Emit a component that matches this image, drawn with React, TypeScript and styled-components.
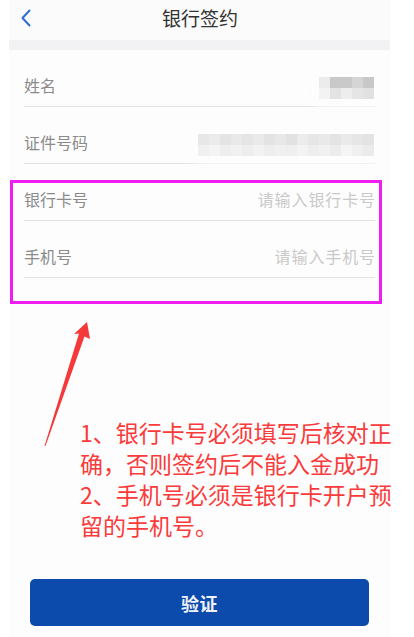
import { FC } from "react";
import styled, { createGlobalStyle } from "styled-components";

// #region styled
const GlobalStyle = createGlobalStyle`
  html, body {
    margin: 0;
    padding: 0;
    background: #ffffff;
  }
  body {
    font-family: "Noto Sans CJK SC", "Noto Sans", sans-serif;
  }
`

const Page = styled.div`
  display: flex;
  width: 414px;
  height: 637px;
  padding-left: 9px;
  box-sizing: border-box;
  background: #ffffff;
  overflow: hidden;
`

const Panel = styled.div`
  position: relative;
  display: flex;
  flex-direction: column;
  width: 381px;
  height: 637px;
  background: #fdfdfd;
`

const Header = styled.div`
  position: relative;
  display: flex;
  align-items: center;
  justify-content: center;
  height: 40px;
  background: #fbfbfb;
`

const BackButton = styled.div`
  position: absolute;
  left: 10px;
  top: 9px;
  width: 14px;
  height: 18px;
  display: flex;
  align-items: center;
  justify-content: center;
`

const Title = styled.h1`
  margin: 0;
  font-size: 19px;
  font-weight: 400;
  color: #333333;
  line-height: 24px;
  margin-top: -5px;
  margin-left: 1px;
`

const Divider = styled.div`
  height: 10px;
  background: #f2f2f4;
`

const Form = styled.div`
  display: flex;
  flex-direction: column;
  padding: 0 15px;
`

const Row = styled.div`
  display: flex;
  align-items: center;
  justify-content: space-between;
  height: 57px;
  box-sizing: border-box;
  padding-top: 14px;
  border-bottom: 1px solid #e2e2e2;
`

const Label = styled.span`
  font-size: 16px;
  line-height: 22px;
  color: #8b8b8b;
`

const Placeholder = styled.span`
  font-size: 16px;
  line-height: 22px;
  color: #c9c9c9;
  letter-spacing: 0.9px;
  margin-right: -1px;
`

const Mosaic = styled.div<{ cols: number }>`
  display: grid;
  grid-template-columns: repeat(${p => p.cols}, 11px);
  grid-auto-rows: 11px;
  margin-top: 5px;
  margin-right: 1px;
  border-radius: 2px;
  box-shadow: 0 4px 8px 5px rgba(253, 253, 253, 0.95);
`

const Cell = styled.span<{ tone: string }>`
  background: ${p => p.tone};
`

const Note = styled.div`
  margin-top: 139px;
  margin-left: 71px;
  width: 318px;
  color: #fa3b3b;
  font-size: 23px;
  line-height: 31px;
`

const NoteItem = styled.p`
  margin: 0;
`

const SubmitButton = styled.button`
  margin-top: 38px;
  margin-left: 21px;
  width: 339px;
  height: 47px;
  border: none;
  border-radius: 5px;
  background: #0c4aab;
  color: #eef2fa;
  font-family: "Noto Sans CJK SC", sans-serif;
  font-size: 18px;
  font-weight: 700;
  letter-spacing: 0.5px;
`

const HighlightBox = styled.div`
  position: absolute;
  left: 1px;
  top: 180px;
  width: 372px;
  height: 124px;
  box-sizing: border-box;
  border: 3px solid #f01df0;
`

const ArrowLayer = styled.svg`
  position: absolute;
  left: 0;
  top: 0;
  pointer-events: none;
`
// #endregion

const nameTones = [
  "#ececec", "#c9c9c9", "#c9c9c9", "#d5d5d5", "#c8c8c8",
  "#f3f3f3", "#e3e3e3", "#ededed", "#e5e5e5", "#e1e1e1",
]

const idTones = [
  "#e7e7e7", "#ebebeb", "#e4e4e4", "#e9e9e9", "#e5e5e5", "#eaeaea", "#e3e3e3", "#e8e8e8",
  "#e2e2e2", "#ececec", "#e6e6e6", "#e9e9e9", "#e4e4e4", "#eaeaea", "#e6e6e6", "#e3e3e3",
  "#f0f0f0", "#f4f4f4", "#eeeeee", "#f1f1f1", "#ededed", "#f2f2f2", "#eeeeee", "#f0f0f0",
  "#efefef", "#f3f3f3", "#eeeeee", "#f1f1f1", "#ececec", "#f5f5f5", "#efefef", "#ebebeb",
]

const BackIcon: FC = () => (
  <svg width="12" height="18" viewBox="0 0 12 18">
    <path d="M9.5 1.5 L2.5 9 L9.5 16.5" fill="none" stroke="#2b6fd2" strokeWidth="2" strokeLinecap="round" strokeLinejoin="round" />
  </svg>
)

const App: FC = () => {
  return (
    <Page>
      <GlobalStyle />
      <Panel>
        <Header>
          <BackButton><BackIcon /></BackButton>
          <Title>银行签约</Title>
        </Header>
        <Divider />
        <Form>
          <Row>
            <Label>姓名</Label>
            <Mosaic cols={5}>
              {nameTones.map((t, i) => <Cell key={i} tone={t} />)}
            </Mosaic>
          </Row>
          <Row>
            <Label>证件号码</Label>
            <Mosaic cols={16}>
              {idTones.map((t, i) => <Cell key={i} tone={t} />)}
            </Mosaic>
          </Row>
          <Row>
            <Label>银行卡号</Label>
            <Placeholder>请输入银行卡号</Placeholder>
          </Row>
          <Row>
            <Label>手机号</Label>
            <Placeholder>请输入手机号</Placeholder>
          </Row>
        </Form>
        <Note>
          <NoteItem>1、银行卡号必须填写后核对正确，否则签约后不能入金成功</NoteItem>
          <NoteItem>2、手机号必须是银行卡开户预留的手机号。</NoteItem>
        </Note>
        <SubmitButton>验证</SubmitButton>

        <HighlightBox />
        <ArrowLayer width="381" height="637" viewBox="0 0 381 637">
          <polygon
            points="78,322 81,339 75.5,336.5 36.5,446 35.5,446 70,333.5 65,334"
            fill="#f5393a"
          />
        </ArrowLayer>
      </Panel>
    </Page>
  );
}

export default App;
